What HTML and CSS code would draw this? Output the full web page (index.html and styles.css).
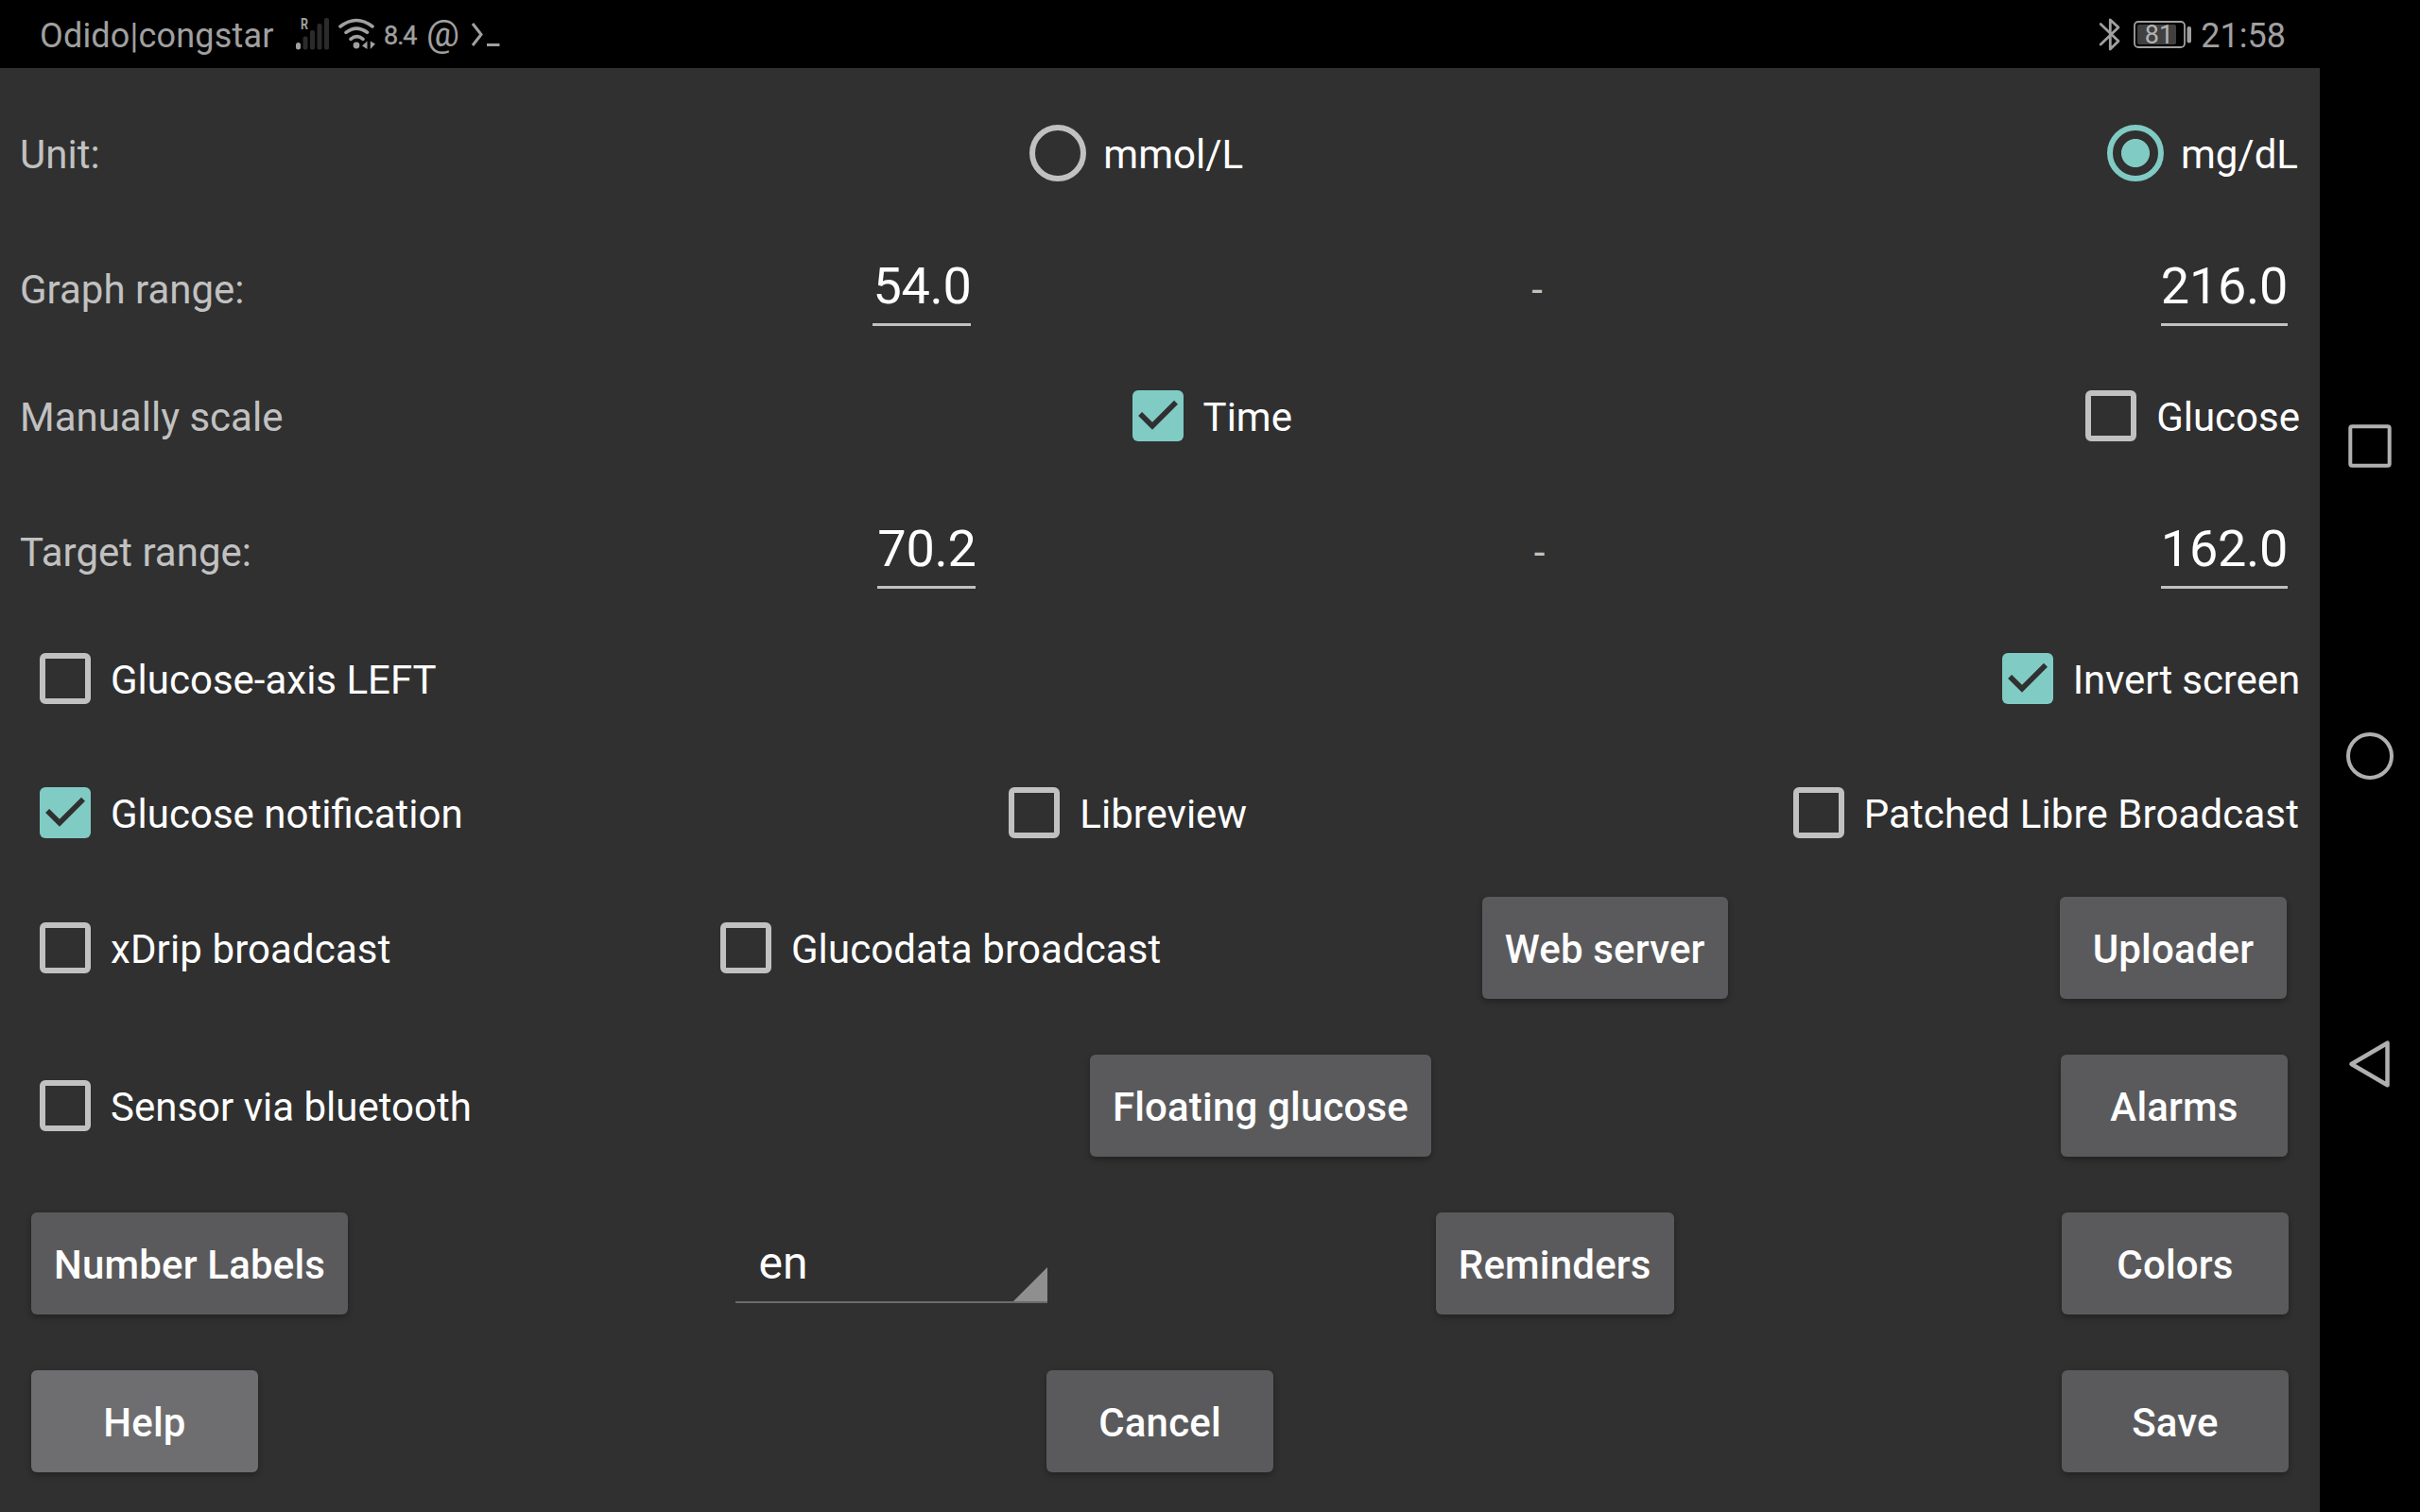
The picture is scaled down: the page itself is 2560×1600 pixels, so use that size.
FILE: index.html
```
<!DOCTYPE html>
<html lang="en">
<head>
<meta charset="utf-8">
<title>Settings</title>
<link rel="stylesheet" href="styles.css">
</head>
<body>
<svg class="defs" width="0" height="0">
  <symbol id="box-off" viewBox="0 0 54 54"><rect x="3" y="3" width="48" height="48" rx="3" fill="none" stroke="#c1c1c1" stroke-width="6"/></symbol>
  <symbol id="box-on" viewBox="0 0 54 54"><rect width="54" height="54" rx="6" fill="#80cbc4"/><path d="M8.1 24.9 21 37.8l25-25" fill="none" stroke="#303030" stroke-width="5.6"/></symbol>
</svg>
<div class="device">
  <div class="main">
    <header class="status">
      <span class="carrier">Odido|congstar</span>
      <svg class="signal" width="35" height="48" viewBox="0 -6 35 48" fill="#2b2b2b"><rect y="27" width="5" height="7.500" rx="2.500" fill="#a0a0a0"/><rect x="7.500" y="20.500" width="5" height="14" rx="2"/><rect x="15" y="14" width="5" height="20.500" rx="2"/><rect x="22.500" y="7" width="5" height="27.500" rx="2"/><rect x="30" y="1" width="5" height="33.500" rx="2"/><text x="5" y="13" font-size="17" font-weight="700" textLength="8" lengthAdjust="spacingAndGlyphs" fill="#a0a0a0">R</text></svg>
      <svg class="wifi" width="40" height="36" viewBox="0 0 40 36" fill="none" stroke="#a0a0a0" stroke-width="3.600" stroke-linecap="round"><path d="M3 10q17-13 34 0M9 16.300q11-8.500 22.500 0M14 23.300q6.500-5.500 13 0"/><circle cx="20" cy="30" r="3.400" fill="#a0a0a0" stroke="none"/><path d="M26 30.500l5.500-5v8.500zM34.800 25.500l5.200 3-5.200 5.500z" fill="#a0a0a0" stroke="none"/></svg>
      <span class="reading">8.4</span>
      <span class="at">@</span>
      <svg class="prompt" width="32" height="36" viewBox="0 0 32 36" fill="none" stroke="#a0a0a0" stroke-width="3"><path d="M2 7l9 11.500L2 30M17 29.500h13.500"/></svg>
      <span class="fill"></span>
      <svg class="bt" width="24" height="36" viewBox="0 0 24 36" fill="none" stroke="#a0a0a0" stroke-width="2.800" stroke-linejoin="round" stroke-linecap="round"><path d="M3.200 7.500 22 25.500 13.300 34V3L22 11 3.200 29"/></svg>
      <svg class="battery" width="62" height="30" viewBox="0 0 62 30"><rect x="1" y="1" width="53" height="27" rx="4" fill="none" stroke="#a0a0a0" stroke-width="1.800"/><rect x="4" y="4" width="41" height="21" rx="2" fill="#404040"/><rect x="56.500" y="6" width="4.500" height="17.500" rx="2" fill="#a0a0a0"/><text x="27" y="24" font-size="27" text-anchor="middle" fill="#b4b4b4">81</text></svg>
      <span class="clock">21:58</span>
    </header>
    <main class="form">
      <div class="row r1">
        <span class="label">Unit:</span>
        <label class="opt"><span class="radio"></span>mmol/L</label>
        <label class="opt"><span class="radio on"></span>mg/dL</label>
      </div>
      <div class="row r2">
        <span class="label">Graph range:</span>
        <span class="edit">54.0</span>
        <span class="label dash">-</span>
        <span class="edit">216.0</span>
      </div>
      <div class="row r3">
        <span class="label">Manually scale</span>
        <label class="opt"><svg class="box"><use href="#box-on"/></svg>Time</label>
        <label class="opt"><svg class="box"><use href="#box-off"/></svg>Glucose</label>
      </div>
      <div class="row r4">
        <span class="label">Target range:</span>
        <span class="edit">70.2</span>
        <span class="label dash">-</span>
        <span class="edit">162.0</span>
      </div>
      <div class="row r5">
        <label class="opt"><svg class="box"><use href="#box-off"/></svg>Glucose-axis LEFT</label>
        <label class="opt invert"><svg class="box"><use href="#box-on"/></svg>Invert screen</label>
      </div>
      <div class="row r6">
        <label class="opt"><svg class="box"><use href="#box-on"/></svg>Glucose notification</label>
        <label class="opt"><svg class="box"><use href="#box-off"/></svg>Libreview</label>
        <label class="opt patched"><svg class="box"><use href="#box-off"/></svg>Patched Libre Broadcast</label>
      </div>
      <div class="row tall r7">
        <label class="opt"><svg class="box"><use href="#box-off"/></svg>xDrip broadcast</label>
        <label class="opt"><svg class="box"><use href="#box-off"/></svg>Glucodata broadcast</label>
        <button class="btn">Web server</button>
        <button class="btn">Uploader</button>
      </div>
      <div class="row tall r8">
        <label class="opt"><svg class="box"><use href="#box-off"/></svg>Sensor via bluetooth</label>
        <button class="btn">Floating glucose</button>
        <button class="btn">Alarms</button>
      </div>
      <div class="row tall">
        <button class="btn">Number Labels</button>
        <div class="spinner"><span class="value">en</span><svg width="36" height="36" viewBox="0 0 36 36"><path d="M36 0v36H0z" fill="#8f8f8f"/></svg></div>
        <button class="btn">Reminders</button>
        <button class="btn">Colors</button>
      </div>
      <div class="row tall">
        <button class="btn focus">Help</button>
        <button class="btn">Cancel</button>
        <button class="btn">Save</button>
      </div>
    </main>
  </div>
  <nav class="nav">
    <svg width="54" height="54" viewBox="0 0 54 54"><rect x="6.300" y="5.300" width="41.400" height="41.400" rx="2"/></svg>
    <svg width="54" height="54" viewBox="0 0 54 54"><circle cx="27" cy="27" r="23"/></svg>
    <svg width="54" height="54" viewBox="0 0 54 54"><path d="M45.500 3.700v44.600L7.500 26z" stroke-width="4.500" stroke-linejoin="round"/></svg>
  </nav>
</div>
</body>
</html>
```
FILE: styles.css
```
* { box-sizing: border-box; }
body { margin: 0; background: #000; font-family: Roboto, sans-serif; font-size: 42px; color: #fff; }
.defs { display: block; height: 0; }
.device { display: flex; width: 2560px; height: 1600px; overflow: hidden; }
.main { width: 2454px; display: flex; flex-direction: column; }

.status { height: 72px; display: flex; align-items: center; padding: 0 36px 0 42px; color: #a0a0a0; background: #000; white-space: nowrap; }
.status svg { flex: none; }
.carrier { font-size: 36px; width: 271px; line-height: 70px; padding-top: 4px; letter-spacing: .18px; }
.signal { overflow: visible; }
.wifi { margin-left: 9px; }
.reading { font-size: 27px; margin-left: 9px; width: 46px; letter-spacing: -1px; padding-top: 3px; -webkit-text-stroke: .4px #a0a0a0; }
.at { font-size: 39px; width: 46px; line-height: 60px; margin: 0 1px 0 -1px; }
.fill { flex: 1; }
.bt { margin-right: 14px; }
.battery { margin: 2px 9px 0 0; }
.clock { font-size: 36px; line-height: 70px; padding-top: 4px; }

.form { height: 1528px; background: #303030; padding: 0 21px; display: flex; flex-direction: column; }
.row { display: flex; justify-content: space-between; align-items: center; line-height: 50px; white-space: nowrap; flex: none; }
.r1 { height: 180px; padding-right: 2px; }
.r2, .r4 { height: 112px; align-items: baseline; padding-right: 1px; }
.r2 { padding-top: 11px; }
.r4 { padding-top: 25px; }
.r3 { height: 152px; }
.r5 { height: 180px; }
.r6 { height: 104px; margin-bottom: 7px; padding-right: 1px; }
.tall { height: 167px; padding-top: 1px; }
.r7 { padding-right: 2px; letter-spacing: .1px; }
.r8 { padding-right: 1px; }
.label { color: #c1c1c1; padding: 4px 70px 0 0; }
.r2 .label, .r4 .label { padding-right: 72px; }
.r2 .dash, .r4 .dash { padding-right: 61px; }
.r3 .label { padding-right: 59px; }
.opt { display: flex; align-items: center; padding-top: 4px; }
.invert { letter-spacing: -.1px; }
.patched { letter-spacing: .1px; }
.box { width: 54px; height: 54px; margin: 0 21px 4px; flex: none; }
.radio { width: 60px; height: 60px; margin: 0 18px 4px; border: 6px solid #c1c1c1; border-radius: 50%; }
.radio.on { border-color: #80cbc4; background: radial-gradient(circle, #80cbc4 14.600px, transparent 15.400px); }
.edit { font-size: 54px; line-height: 79px; letter-spacing: -.3px; margin: 0 12px; border-bottom: 3px solid #c1c1c1; }
.btn { font: 500 42px/50px Roboto, sans-serif; letter-spacing: .17px; color: #fff; background: #5a5a5c; border: 0; border-radius: 6px; min-width: 240px; height: 108px; margin: 0 12px; padding: 4px 24px 0; box-shadow: 0 3px 6px rgba(0,0,0,.3); }
.btn.focus { background: #6e6e70; }
.spinner { width: 330px; height: 84px; margin: 0 12px; padding-left: 24px; display: flex; justify-content: space-between; align-items: flex-end; border-bottom: 2px solid #6b6b6b; font-size: 48px; }
.value { padding-bottom: 15px; }

.nav { width: 106px; display: flex; flex-direction: column; align-items: center; justify-content: center; gap: 273px; }
.nav svg { fill: none; stroke: #b0b0b0; stroke-width: 4; }
```
